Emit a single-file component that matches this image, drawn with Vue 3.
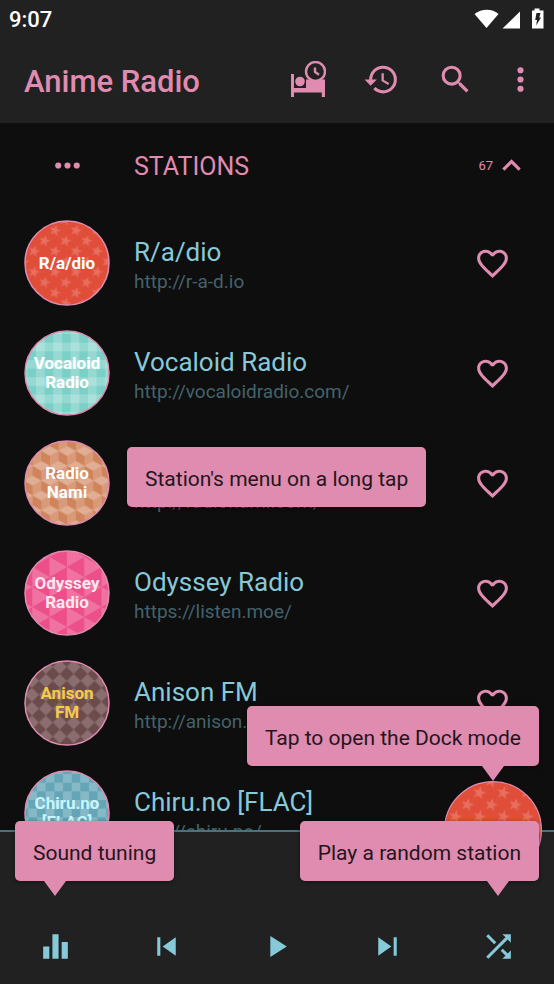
<script setup>
const stations = [
  { name: 'R/a/dio', url: 'http://r-a-d.io', label: ['R/a/dio'], art: 'stars', tone: 'light' },
  { name: 'Vocaloid Radio', url: 'http://vocaloidradio.com/', label: ['Vocaloid', 'Radio'], art: 'gingham', tone: 'light' },
  { name: 'Radio Nami', url: 'http://radionami.com/', label: ['Radio', 'Nami'], art: 'cubes', tone: 'light', tip: "Station's menu on a long tap" },
  { name: 'Odyssey Radio', url: 'https://listen.moe/', label: ['Odyssey', 'Radio'], art: 'triangles', tone: 'rose' },
  { name: 'Anison FM', url: 'http://anison.fm/', label: ['Anison', 'FM'], art: 'diamonds', tone: 'gold' },
  { name: 'Chiru.no [FLAC]', url: 'http://chiru.no/', label: ['Chiru.no', '[FLAC]'], art: 'checks', tone: 'ice' },
]

const toolbar = [
  { label: 'History', path: 'M13.5 8H12v5l4.28 2.54.72-1.21-3.5-2.08V8M13 3a9 9 0 0 0-9 9H1l3.96 4.03L9 12H6a7 7 0 0 1 7-7 7 7 0 0 1 7 7 7 7 0 0 1-7 7c-1.93 0-3.68-.79-4.94-2.06l-1.42 1.42A8.9 8.9 0 0 0 13 21a9 9 0 0 0 9-9 9 9 0 0 0-9-9' },
  { label: 'Search', path: 'M15.5 14h-.79l-.28-.27A6.47 6.47 0 0 0 16 9.5 6.5 6.5 0 1 0 9.5 16c1.61 0 3.09-.59 4.23-1.57l.27.28v.79l5 4.99L20.49 19l-4.99-5zm-6 0a4.5 4.5 0 1 1 0-9 4.5 4.5 0 0 1 0 9z' },
  { label: 'More options', path: 'M12 8a2 2 0 1 0 0-4 2 2 0 0 0 0 4zm0 2a2 2 0 1 0 0 4 2 2 0 0 0 0-4zm0 6a2 2 0 1 0 0 4 2 2 0 0 0 0-4z' },
]

const controls = [
  { label: 'Equalizer', path: 'M10 20h4V4h-4v16zm-6 0h4v-8H4v8zM16 9v11h4V9h-4z', tip: 'Sound tuning', side: 'start' },
  { label: 'Previous', path: 'M6 6h2v12H6zm3.5 6l8.5 6V6z' },
  { label: 'Play', path: 'M8 5.2v13.6L18.7 12z' },
  { label: 'Next', path: 'M6 18l8.5-6L6 6v12zM16 6v12h2V6h-2z' },
  { label: 'Shuffle', path: 'M10.59 9.17L5.41 4 4 5.41l5.17 5.17 1.42-1.41zM14.5 4l2.04 2.04L4 18.59 5.41 20 17.96 7.46 20 9.5V4h-5.5zm.33 9.41l-1.41 1.41 3.13 3.13L14.5 20H20v-5.5l-2.04 2.04-3.13-3.13z', tip: 'Play a random station', side: 'end' },
]
</script>

<template>
  <div class="app">
    <svg class="defs" aria-hidden="true">
      <defs>
        <path id="star" d="M0-6 1.5-1.9 5.8-1.8 2.3.8 3.6 5 0 2.5-3.6 5-2.3.8-5.8-1.8-1.5-1.9Z" transform="rotate(15)" />
        <pattern id="stars" x="-.5" width="21" height="20.8" patternUnits="userSpaceOnUse">
          <rect width="21" height="21" fill="#e04e39" />
          <g fill="#e86e5f">
            <use href="#star" /><use href="#star" x="21" /><use href="#star" y="20.8" />
            <use href="#star" x="21" y="20.8" /><use href="#star" x="10.5" y="10.4" />
          </g>
        </pattern>
        <pattern id="gingham" x="12" y="12.6" width="17.3" height="17.3" patternUnits="userSpaceOnUse">
          <rect width="18" height="18" fill="#7ad0c7" />
          <rect width="8.7" height="17.3" fill="#fff" opacity=".2" />
          <rect width="17.3" height="8.7" fill="#fff" opacity=".2" />
        </pattern>
        <pattern id="cubes" y="6.3" width="17.3" height="29.6" patternUnits="userSpaceOnUse">
          <rect width="18" height="30" fill="#d99a79" />
          <path d="M0 4.8 8.65 9.6v10L0 14.8zM8.65 19.6l8.65 4.8v10l-8.65-4.8zM8.65-10l8.65 4.8v10L8.65 0z" fill="#d0845b" />
          <path d="M0 4.8 8.65 0l8.65 4.8-8.65 4.8zM0 14.8l8.65 4.8L0 24.4zM17.3 14.8l-8.65 4.8 8.65 4.8z" fill="#e0ae94" />
        </pattern>
        <pattern id="triangles" x="8.3" y="7" width="34.6" height="20" patternUnits="userSpaceOnUse">
          <rect width="35" height="20" fill="#ec4f89" />
          <path d="M17.3 0l17.3 10-17.3 10zM0-10 17.3 0 0 10zM0 10l17.3 10L0 30z" fill="#f072a1" />
        </pattern>
        <pattern id="diamonds" x="1" width="13.9" height="13.9" patternUnits="userSpaceOnUse">
          <rect width="14" height="14" fill="#6b4b4c" />
          <path d="M6.95 0l6.95 6.95-6.95 6.95L0 6.95z" fill="#8a6d6e" />
        </pattern>
        <pattern id="checks" x="4.4" y="4" width="17.3" height="17.3" patternUnits="userSpaceOnUse">
          <rect width="18" height="18" fill="#64a6b8" />
          <path d="M0 0h8.65v8.65H0zM8.65 8.65h8.65v8.65H8.65z" fill="#86b9c5" />
        </pattern>
      </defs>
    </svg>

    <header>
      <div class="status">
        <span>9:07</span>
        <svg class="system" viewBox="0 0 74 24" aria-hidden="true">
          <g fill="#fff">
            <path d="M.5 7C7.500 1.200 18.500 1.200 24.500 7L12.500 21z" />
            <path d="M46 4.500V21.500H28.500z" />
            <path d="M60.500 1.500h5v2h4v18H58v-18h2.500z" />
          </g>
          <path d="M62.500 6h4l-1.200 4.500h1.700L62.200 18.500l.8-5.500h-1.800z" fill="#212121" />
        </svg>
      </div>
      <div class="toolbar">
        <h1>Anime Radio</h1>
        <nav>
          <button aria-label="Sleep timer">
            <svg viewBox="0 0 37 37">
              <path d="M2 13h3v14h12V18.500h19V36h-3.200v-4.500H5V36H2z" />
              <circle cx="11" cy="20.500" r="4.800" />
              <circle class="dial" cx="26.500" cy="10.500" r="9.500" />
              <path class="hands" d="M26 6.500v4.500l4 2.800" />
            </svg>
          </button>
          <button v-for="item in toolbar" :key="item.label" :aria-label="item.label">
            <svg viewBox="0 0 24 24"><path :d="item.path" /></svg>
          </button>
        </nav>
      </div>
    </header>

    <main>
      <div class="row heading">
        <button class="lead" aria-label="Group menu">
          <svg viewBox="0 0 24 24"><path d="M6 10a2 2 0 1 0 0 4 2 2 0 0 0 0-4zm12 0a2 2 0 1 0 0 4 2 2 0 0 0 0-4zm-6 0a2 2 0 1 0 0 4 2 2 0 0 0 0-4z" /></svg>
        </button>
        <h2>STATIONS</h2>
        <span class="count">67</span>
        <button class="fold" aria-label="Collapse stations">
          <svg viewBox="0 0 24 24"><path d="M12 8l-6 6 1.410 1.410L12 10.830l4.590 4.580L18 14z" /></svg>
        </button>
      </div>
      <ul>
        <li v-for="station in stations" :key="station.name" class="row station">
          <div class="disc" :class="station.tone">
            <svg viewBox="0 0 86 86" aria-hidden="true">
              <circle cx="43" cy="43" r="42" :fill="`url(#${station.art})`" />
            </svg>
            <span><template v-for="(line, i) in station.label" :key="i"><br v-if="i">{{ line }}</template></span>
          </div>
          <div class="info">
            <h3>{{ station.name }}</h3>
            <p>{{ station.url }}</p>
            <div v-if="station.tip" class="tip over" role="tooltip">{{ station.tip }}</div>
          </div>
          <button class="like" :aria-label="`Add ${station.name} to favourites`">
            <svg viewBox="0 0 24 24"><path d="M12.100 18.550l-.1.100-.11-.1C7.140 14.240 4 11.390 4 8.500 4 6.500 5.500 5 7.500 5c1.540 0 3.040 1 3.570 2.360h1.860C13.460 6 14.960 5 16.500 5c2 0 3.500 1.500 3.500 3.500 0 2.890-3.140 5.740-7.900 10.050M16.500 3c-1.740 0-3.410.81-4.500 2.080C10.910 3.810 9.240 3 7.500 3 4.420 3 2 5.410 2 8.500c0 3.770 3.400 6.860 8.550 11.530L12 21.350l1.450-1.320C18.600 15.360 22 12.270 22 8.500 22 5.410 19.580 3 16.500 3" /></svg>
          </button>
        </li>
      </ul>
    </main>

    <footer>
      <div class="dock">
        <button class="fab" aria-label="Dock mode">
          <svg viewBox="0 0 86 86"><circle cx="43" cy="43" r="42.500" fill="url(#stars)" /></svg>
        </button>
        <div class="tip down" role="tooltip">Tap to open the Dock mode</div>
      </div>
      <div class="controls">
        <div v-for="item in controls" :key="item.label" class="control">
          <button :aria-label="item.label">
            <svg viewBox="0 0 24 24"><path :d="item.path" /></svg>
          </button>
          <div v-if="item.tip" class="tip down" :class="item.side" role="tooltip">{{ item.tip }}</div>
        </div>
      </div>
    </footer>
  </div>
</template>

<style>
body {
  margin: 0;
  background: #0e0e0e;
}
</style>

<style scoped>
.app {
  --pink: #e08bb0;
  --blue: #86c9d9;
  --bar: #212121;
  display: flex;
  flex-direction: column;
  height: 100vh;
  overflow: hidden;
  background: #0e0e0e;
  color: var(--pink);
  font-family: Roboto, "Liberation Sans", sans-serif;
}
.defs {
  position: absolute;
  width: 0;
  height: 0;
}
h1, h2, h3, p, ul {
  margin: 0;
  padding: 0;
  font-weight: 400;
}
button {
  display: grid;
  place-items: center;
  padding: 0;
  border: 0;
  background: none;
  color: inherit;
}
button svg {
  display: block;
  width: 37px;
  height: 37px;
  fill: currentColor;
}
header {
  background: var(--bar);
}
.status {
  display: flex;
  align-items: center;
  justify-content: space-between;
  height: 38px;
  padding: 0 6px 0 9px;
  color: #fff;
  font-size: 22px;
  font-weight: 500;
}
.system {
  width: 74px;
  height: 24px;
}
.toolbar {
  display: flex;
  align-items: center;
  justify-content: space-between;
  height: 85px;
  padding: 0 6px 0 24px;
}
h1 {
  padding-top: 2px;
  font-size: 31px;
  line-height: 36px;
  font-weight: 500;
}
nav {
  display: flex;
}
nav button {
  width: 74px;
  height: 76px;
  padding-bottom: 2px;
}
nav button:last-child {
  width: 56px;
}
.dial,
.hands {
  fill: var(--bar);
  stroke: var(--pink);
  stroke-width: 2.4;
}
.hands {
  fill: none;
}
main {
  flex: 1;
  min-height: 0;
  overflow: hidden;
}
.row {
  display: flex;
  align-items: center;
  padding: 0 24px;
}
.heading {
  height: 85px;
}
.lead {
  width: 86px;
  margin-right: 24px;
}
h2 {
  flex: 1;
  padding-top: 3px;
  font-size: 25px;
  line-height: 30px;
}
.count {
  font-size: 13px;
}
.station {
  height: 110px;
}
.disc {
  display: grid;
  place-items: center;
  width: 86px;
  height: 86px;
  margin-right: 24px;
  color: #fff;
  font-size: 17px;
  line-height: 19px;
  font-weight: 700;
  text-align: center;
}
.disc > * {
  grid-area: 1 / 1;
}
.disc svg {
  width: 86px;
  height: 86px;
  stroke: var(--pink);
  stroke-width: 1.5;
}
.rose {
  color: #ffe8f0;
}
.gold {
  color: #f7cb45;
}
.ice {
  color: #c8f7ff;
}
.info {
  position: relative;
  flex: 1;
  padding-top: 6px;
}
h3 {
  color: var(--blue);
  font-size: 26px;
  line-height: 32px;
}
p {
  color: #43636b;
  font-size: 19px;
  line-height: 28px;
}
.like {
  width: 76px;
  height: 76px;
}
.tip {
  position: absolute;
  z-index: 2;
  padding: 17px 18px 13px;
  border-radius: 5px;
  background: var(--pink);
  box-shadow: 0 1px 4px rgb(0 0 0 / 40%);
  color: #24161c;
  font-size: 21px;
  line-height: 30px;
  white-space: nowrap;
}
.over {
  top: -3px;
  left: -7px;
}
.down {
  bottom: calc(100% + 15px);
}
.down::after {
  content: "";
  position: absolute;
  top: 100%;
  border: solid transparent;
  border-width: 15px 11px 0;
  border-top-color: var(--pink);
}
footer {
  position: relative;
  padding-top: 64px;
  border-top: 2px solid #4b737c;
  background: var(--bar);
}
.dock {
  position: absolute;
  top: -51px;
  right: 12px;
}
.fab svg {
  width: 98px;
  height: 98px;
  stroke: var(--pink);
  stroke-width: 1;
}
.dock .tip {
  right: 3px;
}
.dock .tip::after {
  right: 35px;
}
.controls {
  display: grid;
  grid-template-columns: repeat(5, 1fr);
  color: var(--blue);
}
.control {
  position: relative;
}
.control button {
  width: 100%;
  height: 88px;
  padding-top: 12px;
}
.control .tip {
  bottom: 100%;
  margin-bottom: 15px;
}
.start {
  left: 15px;
}
.start::after {
  left: 29px;
}
.control .end {
  right: 15px;
}
.control .end::after {
  right: 30px;
}
</style>
